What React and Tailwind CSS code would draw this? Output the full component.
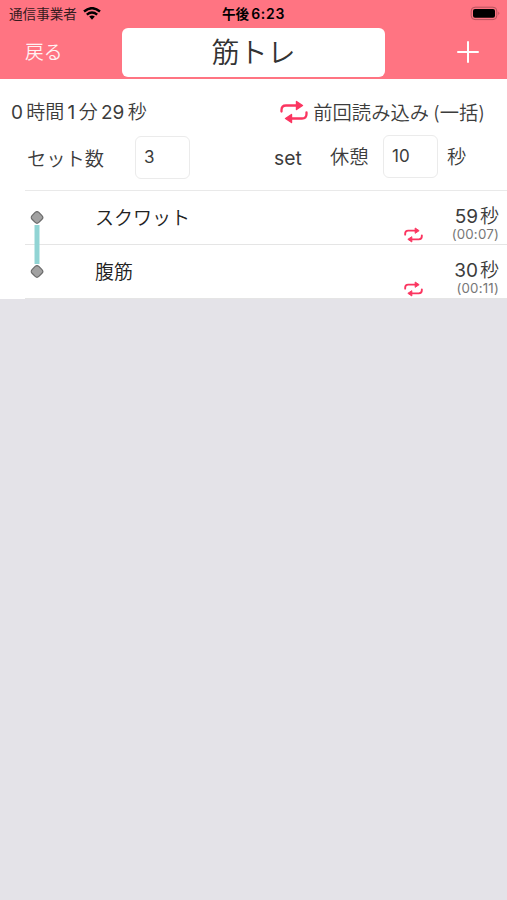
import React from 'react';

function RepeatIcon({ className, weight = 2.3 }) {
  return (
    <svg viewBox="0 0 28 24" className={className} fill="none" stroke="#fb3560" strokeLinejoin="round">
      <path d="M1.5 11.5V10Q1.5 5.5 6 5.5H17" strokeWidth={weight} strokeLinecap="round" />
      <path d="M16.5 1.5L22.5 5.5L16.5 9.5Z" fill="#fb3560" strokeWidth="1.4" />
      <path d="M26.5 12.5V14Q26.5 18.5 22 18.5H11" strokeWidth={weight} strokeLinecap="round" />
      <path d="M11.5 14.5L5.5 18.5L11.5 22.5Z" fill="#fb3560" strokeWidth="1.4" />
    </svg>
  );
}

function StatusBar() {
  return (
    <div className="grid h-[26px] grid-cols-[1fr_auto_1fr] items-center text-black">
      <div className="flex items-center pl-[9px] pt-[2px]">
        <span className="text-[13.6px] leading-[20px] text-[#351a1e]">通信事業者</span>
        <svg viewBox="0 0 18 13" className="-mt-[2px] ml-[6px] h-[13px] w-[18px]" fill="none" stroke="#000" strokeWidth="2.4">
          <path d="M1 4.5Q9 -2.2 17 4.5" />
          <path d="M3.8 7.7Q9 3.4 14.2 7.7" />
          <path d="M6.2 9.6Q9 7.4 11.8 9.6L9 12.8Z" fill="#000" stroke="none" />
        </svg>
      </div>
      <div className="flex items-center pt-[2px] text-[13.6px] font-bold leading-[20px]">
        <span>午後</span>
        <span className="ml-[2px] text-[14px] font-semibold tracking-[0.7px]">6:23</span>
      </div>
      <svg viewBox="0 0 31 15" className="mr-[6px] h-[15px] w-[31px] justify-self-end">
        <rect x="1.2" y="1.2" width="25.6" height="12.4" rx="3.8" fill="none" stroke="#b5525d" />
        <rect x="3" y="3" width="22" height="8.8" rx="2" fill="#000" />
        <path d="M28.5 5.5Q30.2 7.3 28.5 9.2Z" fill="#9d4650" />
      </svg>
    </div>
  );
}

function Header() {
  return (
    <header className="h-[79px] bg-[#ff7482]">
      <StatusBar />
      <div className="flex h-[53px] items-center">
        <span className="w-[122px] pl-[25px] pt-px text-[18.8px] font-[350] leading-[28px] text-[#fff1f2]">戻る</span>
        <div className="-mt-px flex h-[49px] w-[263px] items-center justify-center rounded-[6px] bg-white pt-px text-[28px] font-[350] leading-none text-[#333]">
          筋トレ
        </div>
        <svg viewBox="0 0 22 22" className="-mt-px ml-auto mr-[28px] h-[22px] w-[22px]" stroke="#fff" strokeWidth="2" strokeLinecap="round">
          <path d="M11 1V21M1 11H21" />
        </svg>
      </div>
    </header>
  );
}

function Summary() {
  return (
    <div className="flex h-[112px] flex-col">
      <div className="flex h-[56px] items-center justify-between pl-[11px] pr-[22px] pt-[11px] text-[19.3px] leading-[28px]">
        <div className="flex items-center gap-[3.3px] pt-px text-[19px]">
          <span>0</span><span className="font-[350]">時間</span><span>1</span><span className="font-[350]">分</span><span>29</span><span className="font-[350]">秒</span>
        </div>
        <div className="flex items-center font-[350]">
          <RepeatIcon className="-mt-px mr-[5px] h-[24px] w-[28px]" />
          <span>前回読み込み</span>
          <span className="ml-[4px]">(一括)</span>
        </div>
      </div>
      <div className="flex h-[45px] items-center pl-[27px]">
        <span className="w-[108px] pt-[2px] text-[19.3px] font-[350] leading-[28px]">セット数</span>
        <div className="flex h-[43px] w-[55px] items-center rounded-[6px] border border-[#ebebeb] pl-[8px] pt-px text-[17px]">3</div>
        <span className="ml-[84px] w-[56px] text-[19.3px] leading-[28px]">set</span>
        <span className="-mt-[2px] w-[53px] text-[19.3px] font-[350] leading-[28px]">休憩</span>
        <div className="-mt-[2px] flex h-[43px] w-[55px] items-center rounded-[6px] border border-[#ebebeb] pl-[8px] pt-px text-[17px]">10</div>
        <span className="-mt-[2px] ml-[9px] text-[19.3px] font-[350] leading-[28px]">秒</span>
      </div>
      <div className="ml-[25px] mt-auto h-px bg-[#e9e9e9]" />
    </div>
  );
}

function Marker({ first }) {
  return (
    <svg viewBox="0 0 14 54" className="ml-[5px] h-[54px] w-[14px]">
      {first ? <path d="M7 34V54" stroke="#91d4d4" strokeWidth="5" /> : <path d="M7 0V19" stroke="#91d4d4" strokeWidth="5" />}
      <rect x="2.2" y="21.6" width="9.6" height="9.6" rx="2.6" transform="rotate(45 7 26.4)" fill="#a2a2a2" stroke="#6a6a6a" strokeWidth="1.2" />
    </svg>
  );
}

function Exercise({ name, seconds, elapsed, first }) {
  return (
    <div className="ml-[25px] flex h-[54px] border-b border-[#e5e5e5]">
      <Marker first={first} />
      <span className="ml-[51px] mt-[14px] text-[19px] font-[350] leading-[28px] text-[#222]">{name}</span>
      <RepeatIcon className="ml-auto mt-[36px] h-[16px] w-[19px]" weight={2.8} />
      <div className="flex w-[84px] flex-col items-end pr-[8px] pt-[12px]">
        <div className="flex items-center gap-[2px] text-[19px] leading-[28px]"><span>{seconds}</span><span className="font-[350]">秒</span></div>
        <span className="-mt-[5px] text-[13.3px] leading-[16px] tracking-[0.2px] text-[#777]">{elapsed}</span>
      </div>
    </div>
  );
}

export default function App() {
  return (
    <div className="h-[900px] w-[507px] overflow-hidden whitespace-nowrap bg-[#e4e3e8] font-['Inter','Noto_Sans_CJK_JP',sans-serif] text-[#3c3c3c]">
      <Header />
      <main className="bg-white">
        <Summary />
        <Exercise name="スクワット" seconds="59" elapsed="(00:07)" first />
        <Exercise name="腹筋" seconds="30" elapsed="(00:11)" />
      </main>
    </div>
  );
}
